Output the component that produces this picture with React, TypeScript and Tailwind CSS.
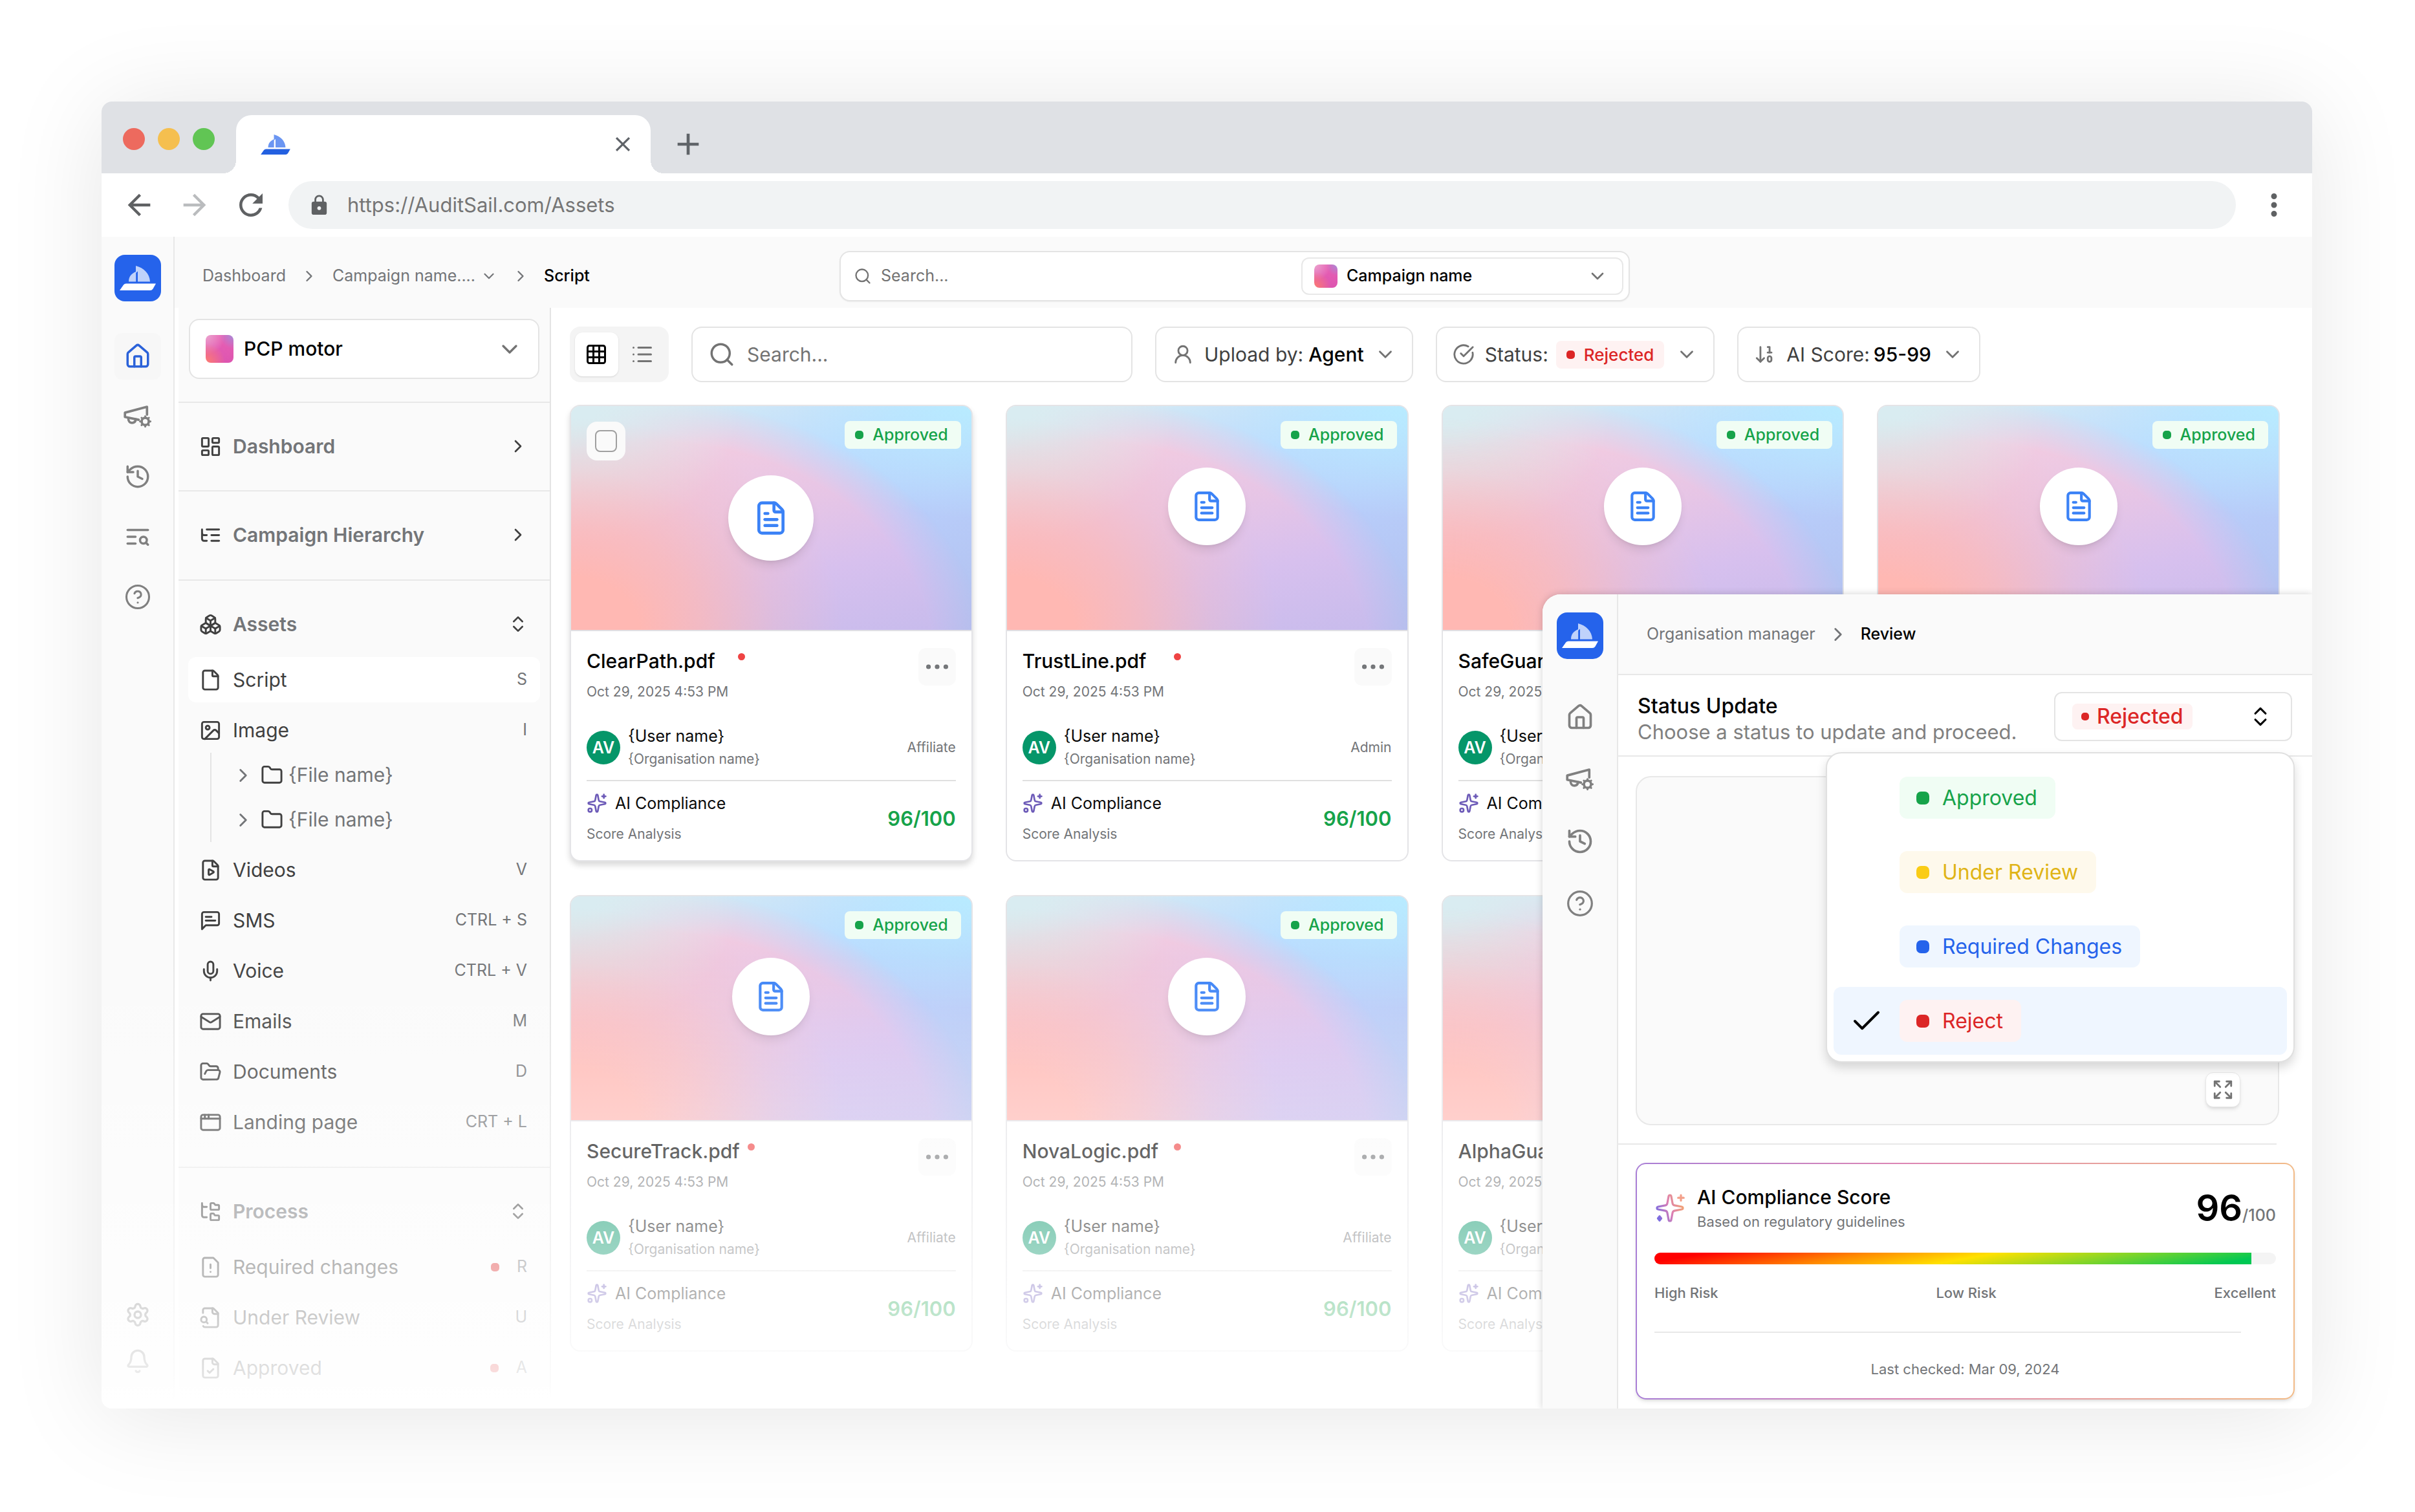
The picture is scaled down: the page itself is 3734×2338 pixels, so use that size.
import React, { useState } from 'react';
import {
  AppWindow,
  ArrowDown10,
  Bell,
  Boxes,
  Check,
  ChevronDown,
  ChevronRight,
  ChevronsUpDown,
  CircleCheckBig,
  CircleQuestionMark,
  Ellipsis,
  Expand,
  File,
  FilePlay,
  FileText,
  Folder,
  FolderOpen,
  FolderTree,
  Grid3x3,
  History,
  House,
  Image,
  LayoutDashboard,
  List,
  Mail,
  Mic,
  Search,
  Settings,
  Sparkles,
  UserRound,
} from 'lucide-react';
import { MdAdd, MdArrowBack, MdArrowForward, MdClose, MdLock, MdMoreVert, MdRefresh } from 'react-icons/md';

type IconProps = { size?: number; className?: string };

/* Icons that the packages do not have in this drawing */

const StrokeIcon = ({ size = 24, className, children }: IconProps & { children: React.ReactNode }) => (
  <svg
    width={size}
    height={size}
    viewBox="0 0 24 24"
    fill="none"
    stroke="currentColor"
    strokeWidth="2"
    strokeLinecap="round"
    strokeLinejoin="round"
    className={className}
    aria-hidden="true"
  >
    {children}
  </svg>
);

const CampaignSettingsIcon = (props: IconProps) => (
  <StrokeIcon {...props}>
    <path d="M19.8 10.5V3.8L1.2 8.8v3.6l11.6 2.4" />
    <path d="M4 13.2c0 2.6 1.2 4.2 3.1 4.2s3-1.2 3.3-3" />
    <circle cx="18.3" cy="16.2" r="3" />
    <path
      strokeWidth="1.6"
      d="M18.3 12.6v-.8M18.3 20.6v-.8M14.7 16.2h-.8M22.7 16.2h-.8M15.8 13.7l-.6-.6M21.4 19.3l-.6-.6M15.8 18.7l-.6.6M21.4 13.1l-.6.6"
    />
  </StrokeIcon>
);

const LogSearchIcon = (props: IconProps) => (
  <StrokeIcon {...props}>
    <path d="M21 6H3" />
    <path d="M10 12H3" />
    <path d="M10 18H3" />
    <circle cx="17" cy="15" r="3" />
    <path d="m21 19-1.9-1.9" />
  </StrokeIcon>
);

const HierarchyIcon = (props: IconProps) => (
  <StrokeIcon {...props}>
    <path d="M21 12h-8" />
    <path d="M21 6H8" />
    <path d="M21 18h-8" />
    <path d="M3 6v4c0 1.1.9 2 2 2h3" />
    <path d="M3 10v6c0 1.1.9 2 2 2h3" />
  </StrokeIcon>
);

const SmsIcon = (props: IconProps) => (
  <StrokeIcon {...props}>
    <path d="M21 15a2 2 0 0 1-2 2H7l-4 4V5a2 2 0 0 1 2-2h14a2 2 0 0 1 2 2z" />
    <path d="M13 8H7" />
    <path d="M17 12H7" />
  </StrokeIcon>
);

const FileAlertIcon = (props: IconProps) => (
  <StrokeIcon {...props}>
    <path d="M15 2H6a2 2 0 0 0-2 2v16a2 2 0 0 0 2 2h12a2 2 0 0 0 2-2V7Z" />
    <path d="M12 9v4" />
    <path d="M12 17h.01" />
  </StrokeIcon>
);

const FileReviewIcon = (props: IconProps) => (
  <StrokeIcon {...props}>
    <path d="M14 2v4a2 2 0 0 0 2 2h4" />
    <path d="M4.268 21a2 2 0 0 0 1.727 1H18a2 2 0 0 0 2-2V7l-5-5H6a2 2 0 0 0-2 2v3" />
    <path d="m9 18-1.5-1.5" />
    <circle cx="5" cy="14" r="3" />
  </StrokeIcon>
);

const FileApprovedIcon = (props: IconProps) => (
  <StrokeIcon {...props}>
    <path d="M15 2H6a2 2 0 0 0-2 2v16a2 2 0 0 0 2 2h12a2 2 0 0 0 2-2V7Z" />
    <path d="M14 2v4a2 2 0 0 0 2 2h4" />
    <path d="m9 15 2 2 4-4" />
  </StrokeIcon>
);

const GradientSparkles = () => (
  <svg width="48" height="48" viewBox="0 0 24 24" fill="none" stroke="url(#sparkle)" strokeWidth="1.6" strokeLinecap="round" strokeLinejoin="round" aria-hidden="true">
    <defs>
      <linearGradient id="sparkle" gradientUnits="userSpaceOnUse" x1="2" y1="16" x2="22" y2="8">
        <stop stopColor="#7c6ce0" />
        <stop offset="0.5" stopColor="#dc7fb4" />
        <stop offset="1" stopColor="#f3a46e" />
      </linearGradient>
    </defs>
    <path d="M11.017 2.814a1 1 0 0 1 1.966 0l1.051 5.558a2 2 0 0 0 1.594 1.594l5.558 1.051a1 1 0 0 1 0 1.966l-5.558 1.051a2 2 0 0 0-1.594 1.594l-1.051 5.558a1 1 0 0 1-1.966 0l-1.051-5.558a2 2 0 0 0-1.594-1.594l-5.558-1.051a1 1 0 0 1 0-1.966l5.558-1.051a2 2 0 0 0 1.594-1.594z" />
    <path d="M20.500 2v4.200" stroke="#f3a08a" />
    <path d="M22.600 4.100h-4.200" stroke="#f3a08a" />
    <path d="m4 18.400 1.300 1.600L4 21.600 2.700 20z" fill="#7c6ce0" />
  </svg>
);

const Boat = ({ className, sail, hull }: { className: string; sail: string; hull: string }) => (
  <svg viewBox="0 0 56 38" className={className} aria-hidden="true">
    <path d="M25 0C37 3 46.500 12 47 24.500H28V8.500L25 11Z" fill={sail} />
    <path d="M25.200 9C18 12 14 17 14 24.500H25.200Z" fill={sail} />
    <path d="M10 27.500H56L51.500 35.500Q50 38 47 38H0L6 29.500Q7.500 27.500 10 27.500Z" fill={hull} />
  </svg>
);

const Logo = () => (
  <a href="#home" aria-label="AuditSail" className="flex size-[72px] items-center justify-center rounded-2xl bg-[#2563eb]">
    <Boat className="h-[38px] w-14" sail="#bfd2fb" hull="#ffffff" />
  </a>
);

const Swatch = ({ className }: { className: string }) => (
  <span
    className={`block shrink-0 rounded-lg bg-[radial-gradient(circle_at_0%_100%,#ff7d6e,transparent_50%),radial-gradient(circle_at_100%_0%,#a58bd8,transparent_35%),radial-gradient(circle_at_0%_0%,#eba6cf,transparent_50%),linear-gradient(#e860b4,#dd55b0)] ${className}`}
  />
);

/* Browser chrome */

const BrowserBar = () => (
  <div>
    <div className="flex h-[111px] items-end bg-[#dfe1e5]">
      <div className="flex h-full w-[208px] items-center gap-5 pt-1 pl-[33px]">
        <span className="size-[34px] rounded-full bg-[#ed6a5e]" />
        <span className="size-[34px] rounded-full bg-[#f5bf4f]" />
        <span className="size-[34px] rounded-full bg-[#61c554]" />
      </div>
      <div className="relative flex h-[90px] w-[641px] items-center justify-between rounded-t-3xl bg-white pr-6 pl-[38px] before:absolute before:-left-5 before:bottom-0 before:size-5 before:bg-[radial-gradient(circle_at_0_0,transparent_20px,#fff_20px)] after:absolute after:-right-5 after:bottom-0 after:size-5 after:bg-[radial-gradient(circle_at_100%_0,transparent_20px,#fff_20px)]">
        <Boat className="h-[31px] w-[46px]" sail="#6b96f2" hull="#2360e0" />
        <button aria-label="Close tab" className="text-[#5f6368]">
          <MdClose size={38} />
        </button>
      </div>
      <button aria-label="New tab" className="ml-[30px] flex h-[90px] items-center text-[#5f6368]">
        <MdAdd size={56} />
      </button>
    </div>
    <div className="flex h-[98px] items-center bg-white pr-8 pl-8">
      <div className="flex w-[257px] items-center gap-[34px] text-[#5f6163]">
        <button aria-label="Back"><MdArrowBack size={52} /></button>
        <button aria-label="Forward" className="text-[#babcbe]"><MdArrowForward size={52} /></button>
        <button aria-label="Reload"><MdRefresh size={54} /></button>
      </div>
      <label className="flex h-[74px] flex-1 items-center gap-[26px] rounded-full bg-[#f1f3f4] pl-[30px]">
        <MdLock size={35} className="text-[#5f6163]" />
        <input
          aria-label="Address"
          defaultValue="https://AuditSail.com/Assets"
          className="flex-1 bg-transparent text-[31px] text-[#757575] outline-none"
        />
      </label>
      <button aria-label="Browser menu" className="ml-8 text-[#5f6163]">
        <MdMoreVert size={54} />
      </button>
    </div>
  </div>
);

/* Left rail and sidebar */

const Rail = () => (
  <nav aria-label="Main" className="flex w-[113px] shrink-0 flex-col items-center border-r-2 border-[#e8e8e8] bg-[#fafafa] pt-7 pb-[53px] text-[#808080]">
    <Logo />
    <div className="mt-[49px] flex flex-col items-center gap-[21px]">
      <a href="#home" aria-label="Home" className="flex size-[72px] items-center justify-center rounded-xl bg-[#f7f7f7] text-[#2b62d9]">
        <House size={42} />
      </a>
      <a href="#campaigns" aria-label="Campaign settings" className="flex size-[72px] items-center justify-center">
        <CampaignSettingsIcon size={44} />
      </a>
      <a href="#history" aria-label="History" className="flex size-[72px] items-center justify-center">
        <History size={42} />
      </a>
      <a href="#logs" aria-label="Logs" className="flex size-[72px] items-center justify-center">
        <LogSearchIcon size={42} />
      </a>
      <a href="#help" aria-label="Help" className="flex size-[72px] items-center justify-center">
        <CircleQuestionMark size={42} strokeWidth={1.75} />
      </a>
    </div>
    <div className="mt-auto flex flex-col gap-8">
      <button aria-label="Settings"><Settings size={40} /></button>
      <button aria-label="Notifications"><Bell size={40} /></button>
    </div>
  </nav>
);

type Item = { label: string; keys: string; icon: React.ElementType; dot?: boolean; files?: string[]; active?: boolean };

const assets: Item[] = [
  { label: 'Script', keys: 'S', icon: File, active: true },
  { label: 'Image', keys: 'I', icon: Image, files: ['{File name}', '{File name}'] },
  { label: 'Videos', keys: 'V', icon: FilePlay },
  { label: 'SMS', keys: 'CTRL + S', icon: SmsIcon },
  { label: 'Voice', keys: 'CTRL + V', icon: Mic },
  { label: 'Emails', keys: 'M', icon: Mail },
  { label: 'Documents', keys: 'D', icon: FolderOpen },
  { label: 'Landing page', keys: 'CRT + L', icon: AppWindow },
];

const process: Item[] = [
  { label: 'Required changes', keys: 'R', icon: FileAlertIcon, dot: true },
  { label: 'Under Review', keys: 'U', icon: FileReviewIcon },
  { label: 'Approved', keys: 'A', icon: FileApprovedIcon, dot: true },
];

const SectionHead = ({ icon: Icon, label, end: End }: { icon: React.ElementType; label: string; end: React.ElementType }) => (
  <button className="flex h-[70px] w-full items-center gap-[17px] pr-[33px] pl-8 text-[#404040]">
    <Icon size={35} />
    <span className="text-[30px] font-semibold text-[#737578]">{label}</span>
    <End size={32} className="ml-auto" />
  </button>
);

const ItemList = ({ items }: { items: Item[] }) => (
  <ul className="mx-[15px] mt-4 flex flex-col gap-2">
    {items.map(({ label, keys, icon: Icon, dot, files, active }) => (
      <li key={label}>
        <a
          href="#assets"
          className={`flex h-[70px] items-center gap-[17px] rounded-xl pr-5 pl-[17px] text-[#404040] ${active ? 'bg-white' : ''}`}
        >
          <Icon size={35} />
          <span className="text-[30px]">{label}</span>
          {dot && <span className="mr-2.5 ml-auto size-[13px] rounded-[5px] bg-[#dc2626]" />}
          <span className={`text-[25px] text-[#737578] ${dot ? '' : 'ml-auto'}`}>{keys}</span>
        </a>
        {files && (
          <ul className="ml-[34px] border-l-2 border-[#e4e4e4]">
            {files.map((file, i) => (
              <li key={i}>
                <button className="flex h-[69px] items-center gap-2 pl-8 text-[30px] text-[#737578]">
                  <ChevronRight size={34} />
                  <Folder size={35} className="ml-0.5 text-[#404040]" />
                  {file}
                </button>
              </li>
            ))}
          </ul>
        )}
      </li>
    ))}
  </ul>
);

const Sidebar = () => (
  <aside className="w-[582px] shrink-0 border-r-2 border-l-6 border-r-[#e4e4e4] border-l-white bg-[#fafafa]">
    <div className="px-4 pt-[17px] pb-[35px]">
      <div className="relative flex items-center">
        <Swatch className="absolute left-[26px] size-[43px]" />
        <select
          aria-label="Workspace"
          className="h-[93px] w-full appearance-none rounded-2xl border-2 border-[#e4e4e4] bg-white pl-[83px] text-[30px] font-medium text-black"
        >
          <option>PCP motor</option>
        </select>
        <ChevronDown size={40} className="pointer-events-none absolute right-[26px] text-[#737373]" />
      </div>
    </div>
    <div className="border-t-2 border-[#e8e8e8] pt-8 pb-[33px]">
      <SectionHead icon={LayoutDashboard} label="Dashboard" end={ChevronRight} />
    </div>
    <div className="border-t-2 border-[#e8e8e8] pt-8 pb-[34px]">
      <SectionHead icon={HierarchyIcon} label="Campaign Hierarchy" end={ChevronRight} />
    </div>
    <div className="border-t-2 border-[#e8e8e8] pt-8 pb-[34px]">
      <SectionHead icon={Boxes} label="Assets" end={ChevronsUpDown} />
      <ItemList items={assets} />
    </div>
    <div className="border-t-2 border-[#e8e8e8] pt-8 pb-7">
      <SectionHead icon={FolderTree} label="Process" end={ChevronsUpDown} />
      <ItemList items={process} />
    </div>
  </aside>
);

/* Top header */

const Header = () => (
  <header className="grid h-[110px] grid-cols-[1fr_1222px_1fr] items-center bg-[#fafafa] pt-3 pr-[27px]">
    <nav aria-label="Breadcrumb" className="flex items-center gap-[22px] pl-[43px] text-[25px] text-[#737578]">
      <a href="#dashboard">Dashboard</a>
      <ChevronRight size={28} />
      <button className="flex items-center gap-2">
        Campaign name....
        <ChevronDown size={26} />
      </button>
      <ChevronRight size={28} />
      <span className="font-medium text-black">Script</span>
    </nav>
    <div className="flex h-[78px] items-center gap-3.5 rounded-2xl border-2 border-[#e4e4e4] bg-white pr-2 pl-5 shadow-xs">
      <Search size={28} className="text-[#737373]" />
      <input type="search" aria-label="Search everything" placeholder="Search..." className="min-w-0 flex-1 text-[25px] outline-none placeholder:text-[#737373]" />
      <div className="relative flex items-center">
        <Swatch className="absolute left-5 size-[36px]" />
        <select
          aria-label="Campaign"
          className="h-[58px] w-[498px] appearance-none rounded-xl border-2 border-[#e8e8e8] bg-white pl-[68px] text-[25px] font-medium text-black"
        >
          <option>Campaign name</option>
        </select>
        <ChevronDown size={32} className="pointer-events-none absolute right-6 text-[#737373]" />
      </div>
    </div>
  </header>
);

/* Filter bar */

const selectText = 'field-sizing-content appearance-none bg-transparent font-medium';

const Filters = () => (
  <div className="flex items-center gap-[35px] text-[30px] text-[#404040]">
    <div className="flex h-[86px] w-[153px] items-center gap-1 rounded-2xl bg-[#f4f4f4] px-2">
      <button aria-label="Grid view" className="flex size-[68px] items-center justify-center rounded-xl bg-white text-black shadow-sm">
        <Grid3x3 size={36} />
      </button>
      <button aria-label="List view" className="flex size-[68px] items-center justify-center text-[#737373]">
        <List size={36} />
      </button>
    </div>
    <label className="flex h-[86px] w-[682px] items-center gap-[18px] rounded-2xl border-2 border-[#e4e4e4] px-6">
      <Search size={42} className="shrink-0 text-[#737373]" />
      <input type="search" aria-label="Search assets" placeholder="Search..." className="min-w-0 flex-1 outline-none placeholder:text-[#737373]" />
    </label>
    <label className="flex h-[86px] items-center rounded-2xl border-2 border-[#e4e4e4] px-6">
      <UserRound size={34} className="mr-4 text-[#737373]" />
      Upload by:
      <select className={`ml-2 text-black ${selectText}`}>
        <option>Agent</option>
      </select>
      <ChevronDown size={34} className="ml-4 text-[#737373]" />
    </label>
    <label className="flex h-[86px] items-center rounded-2xl border-2 border-[#e4e4e4] px-6">
      <CircleCheckBig size={34} className="mr-4 text-[#737373]" />
      Status:
      <span className="ml-3 flex h-[43px] items-center gap-3.5 rounded-lg bg-[#fef2f2] px-4 text-[26px] text-[#dc2626]">
        <span className="size-[13px] rounded-[5px] bg-[#dc2626]" />
        <select className={selectText}>
          <option>Rejected</option>
        </select>
      </span>
      <ChevronDown size={34} className="ml-[18px] text-[#737373]" />
    </label>
    <label className="flex h-[86px] items-center rounded-2xl border-2 border-[#e4e4e4] px-6">
      <ArrowDown10 size={34} className="mr-4 text-[#737373]" />
      AI Score:
      <select className={`ml-1.5 text-black ${selectText}`}>
        <option>95-99</option>
      </select>
      <ChevronDown size={34} className="ml-4 text-[#737373]" />
    </label>
  </div>
);

/* Asset cards */

type Card = { id: number; title?: string; role?: string; active?: boolean };

const cards: Card[] = [
  { id: 1, title: 'ClearPath.pdf', role: 'Affiliate', active: true },
  { id: 2, title: 'TrustLine.pdf', role: 'Admin' },
  { id: 3, title: 'SafeGuard.pdf', role: 'Affiliate' },
  { id: 4 },
  { id: 5, title: 'SecureTrack.pdf', role: 'Affiliate' },
  { id: 6, title: 'NovaLogic.pdf', role: 'Affiliate' },
  { id: 7, title: 'AlphaGuard.pdf', role: 'Affiliate' },
];

const Thumb = ({ title, active }: { title?: string; active?: boolean }) => (
  <div
    className={`relative flex h-[348px] items-center justify-center overflow-hidden rounded-t-[14px] border-b-2 border-[#e0e0e4] bg-[radial-gradient(ellipse_45%_50%_at_100%_0%,#b8ebff,transparent),linear-gradient(160deg,#d9edf2_5%,#bcdcff_38%,#b8cdfa_62%,#b2c0ee)] ${active ? '' : 'pb-9'}`}
  >
    <div className="absolute inset-0 bg-[linear-gradient(165deg,#f3cce0_20%,#e6c5e6_48%,#d7c0ee_70%,#c6bbec)] [mask-image:radial-gradient(ellipse_84%_118%_at_20%_115%,#000_84%,rgba(0,0,0,0.5)_92%,transparent_100%)]" />
    <div className="absolute inset-0 bg-[radial-gradient(ellipse_68%_95%_at_0%_100%,#ffb8b3_25%,rgba(255,184,179,0.7)_48%,rgba(255,184,179,0.25)_75%,rgba(255,184,179,0)),radial-gradient(ellipse_42%_62%_at_0%_0%,#d9ecf1_15%,rgba(217,236,241,0.6)_50%,rgba(217,236,241,0))]" />
    {active && (
      <label className="absolute top-6 left-6 flex size-[60px] items-center justify-center rounded-2xl bg-[#fafafa]">
        <input type="checkbox" aria-label={`Select ${title}`} className="size-[34px] appearance-none rounded-lg border-2 border-[#a0a0a0]" />
      </label>
    )}
    <span className="absolute top-[23px] right-4 flex h-[43px] items-center gap-3.5 rounded-lg bg-[#f0fdf4] pr-5 pl-4 text-[25px] font-medium text-[#16a34a]">
      <span className="size-[13px] rounded-[5px] bg-[#16a34a]" />
      Approved
    </span>
    <span className={`relative flex items-center justify-center rounded-full bg-white text-[#3b82f6] shadow-lg ${active ? 'size-[132px]' : 'size-[120px]'}`}>
      <FileText size={active ? 56 : 50} />
    </span>
  </div>
);

const AssetCard = ({ title, role, active }: Card) => (
  <article className={`rounded-2xl border-2 border-[#e4e4e7] bg-white ${active ? 'shadow-[0_6px_10px_rgba(0,0,0,0.15)]' : ''}`}>
    <Thumb title={title} active={active} />
    {title && (
      <div className="px-6 pt-[26px] pb-[22px] text-[21px] text-[#737578]">
        <div className="flex items-start justify-between">
          <div>
            <div className="flex gap-3 text-[30px] leading-10 font-medium text-black">
              <h3 className="min-w-[222px]">{title}</h3>
              <span className="mt-2 size-[11px] rounded-full bg-[#ef4444]" />
            </div>
            <p className="mt-3.5 leading-7">Oct 29, 2025 4:53 PM</p>
          </div>
          <button aria-label={`More actions for ${title}`} className="flex size-[58px] items-center justify-center rounded-xl bg-[#fafafa]">
            <Ellipsis size={46} strokeWidth={1.75} />
          </button>
        </div>
        <div className="mt-9 flex items-center leading-9">
          <span className="flex size-[52px] items-center justify-center rounded-full bg-[#059669] text-[25px] font-semibold text-white">AV</span>
          <div className="ml-3">
            <p className="text-[25px] text-[#0a0a0a]">{'{User name}'}</p>
            <p>{'{Organisation name}'}</p>
          </div>
          <span className="ml-auto">{role}</span>
        </div>
        <div className="mt-3.5 flex items-center justify-between border-t-2 border-[#e0e0e0] pt-4 leading-9">
          <div>
            <p className="flex items-center gap-3 text-[25px] text-[#0a0a0a]">
              <Sparkles size={32} className="text-[#6d5bb8]" />
              AI Compliance
            </p>
            <p className="mt-3">Score Analysis</p>
          </div>
          <strong className="text-[31px] font-semibold text-[#16a34a]">96/100</strong>
        </div>
      </div>
    )}
  </article>
);

/* Review panel */

const statuses = [
  { label: 'Approved', badge: 'bg-[#f0fdf4] text-[#16a34a]', dot: 'bg-[#16a34a]' },
  { label: 'Under Review', badge: 'bg-[#fef9ec] text-[#e0b416]', dot: 'bg-[#facc15]' },
  { label: 'Required Changes', badge: 'bg-[#eff6ff] text-[#2563eb]', dot: 'bg-[#2563eb]' },
  { label: 'Reject', badge: 'bg-[#fef2f2] text-[#dc2626]', dot: 'bg-[#dc2626]' },
];

const StatusMenu = ({ selected, onSelect }: { selected: string; onSelect: (label: string) => void }) => (
  <ul
    role="listbox"
    aria-label="Status"
    className="absolute top-[119px] right-[27px] z-10 flex w-[725px] flex-col gap-2.5 rounded-3xl border-2 border-[#e0e0e0] bg-white px-2.5 pt-4 pb-2.5 shadow-[0_8px_16px_rgba(0,0,0,0.15)]"
  >
    {statuses.map(({ label, badge, dot }) => (
      <li key={label} role="option" aria-selected={label === selected}>
        <button
          onClick={() => onSelect(label)}
          className={`flex h-[105px] w-full items-center rounded-xl ${label === selected ? 'bg-[#eff6ff]' : ''}`}
        >
          <span className="flex w-[102px] justify-center text-black">{label === selected && <Check size={54} strokeWidth={1.75} />}</span>
          <span className={`flex h-[65px] items-center gap-5 rounded-xl pr-7 pl-[26px] text-[32px] ${badge}`}>
            <span className={`size-5 rounded-[7px] ${dot}`} />
            {label}
          </span>
        </button>
      </li>
    ))}
  </ul>
);

const ScoreCard = () => (
  <section className="mt-7 mr-[27px] mb-3.5 ml-[27px] rounded-2xl bg-[linear-gradient(90deg,#a97fd6,#dc85b4_40%,#f2bb88)] p-0.5 shadow-md">
    <div className="rounded-[14px] bg-white px-[27px] pt-[31px] pb-[29px] text-[22px] leading-8 text-[#737578]">
      <div className="flex items-center">
        <GradientSparkles />
        <div className="ml-[18px]">
          <h2 className="text-[30px] leading-10 font-medium text-black">AI Compliance Score</h2>
          <p className="mt-0.5">Based on regulatory guidelines</p>
        </div>
        <p className="ml-auto text-[25px] font-medium">
          <span className="text-[56px] leading-none font-semibold text-black">96</span>/100
        </p>
      </div>
      <div role="meter" aria-label="Compliance score" aria-valuenow={96} aria-valuemin={0} aria-valuemax={100} className="mt-8 h-[18px] overflow-hidden rounded-full bg-[#f4f4f4]">
        <div className="h-full w-[96%] bg-[linear-gradient(170deg,#ff0000_8%,#ff8a00_33%,#ffe100_52%,#00c853_95%)]" />
      </div>
      <div className="mt-7 flex justify-between font-medium">
        <span>High Risk</span>
        <span>Low Risk</span>
        <span>Excellent</span>
      </div>
      <hr className="mt-11 mr-[54px] border-t-2 border-[#e8e8e8]" />
      <p className="mt-10 text-center">Last checked: Mar 09, 2024</p>
    </div>
  </section>
);

const ReviewPanel = () => {
  const [selected, setSelected] = useState('Reject');
  const [open, setOpen] = useState(true);

  return (
    <section aria-label="Review" className="absolute right-0 bottom-0 z-20 flex w-[1190px] rounded-tl-[28px] bg-white shadow-[0_0_12px_rgba(0,0,0,0.18)]">
      <nav aria-label="Review navigation" className="flex w-[117px] shrink-0 flex-col items-center rounded-tl-[28px] border-r-2 border-[#e8e8e8] bg-[#fafafa] pt-7 text-[#808080]">
        <Logo />
        <div className="mt-[68px] flex flex-col items-center gap-[52px]">
          <a href="#home" aria-label="Home"><House size={44} /></a>
          <a href="#campaigns" aria-label="Campaign settings"><CampaignSettingsIcon size={44} /></a>
          <a href="#history" aria-label="History"><History size={44} /></a>
          <a href="#help" aria-label="Help"><CircleQuestionMark size={44} strokeWidth={1.75} /></a>
        </div>
      </nav>
      <div className="min-w-0 flex-1">
        <nav aria-label="Review breadcrumb" className="flex h-[125px] items-center gap-[18px] border-b-2 border-[#e8e8e8] bg-[#fafafa] pl-11 text-[25px] text-[#737578]">
          <a href="#organisation">Organisation manager</a>
          <ChevronRight size={34} />
          <span className="font-medium text-black">Review</span>
        </nav>
        <div className="relative flex h-[126px] items-center justify-between border-b-2 border-[#e8e8e8] pr-[31px] pl-[30px] text-[32px] leading-10">
          <div className="pt-3">
            <h2 className="font-medium text-black">Status Update</h2>
            <p className="text-[31px] text-[#808080]">Choose a status to update and proceed.</p>
          </div>
          <button
            aria-haspopup="listbox"
            aria-expanded={open}
            onClick={() => setOpen(!open)}
            className="mt-1 flex h-[76px] w-[368px] items-center justify-between rounded-xl border-2 border-[#e4e4e4] pr-7 pl-[26px]"
          >
            <span className="flex h-10 items-center gap-3 rounded-lg bg-[#fef2f2] px-3.5 font-medium text-[#dc2626]">
              <span className="size-3 rounded-[5px] bg-[#dc2626]" />
              Rejected
            </span>
            <ChevronsUpDown size={38} className="text-black" />
          </button>
          {open && <StatusMenu selected={selected} onSelect={setSelected} />}
        </div>
        <div className="mt-[30px] mr-[51px] ml-[27px] flex h-[540px] items-end justify-end rounded-3xl border-2 border-[#e8e8e8] bg-[#fafafa] pr-[58px] pb-[26px]">
          <button aria-label="Expand preview" className="flex size-[54px] items-center justify-center rounded-xl border border-[#e8e8e8] bg-white text-[#737373] shadow-md">
            <Expand size={34} />
          </button>
        </div>
        <hr className="mt-7 mr-[55px] border-t-2 border-[#e8e8e8]" />
        <ScoreCard />
      </div>
    </section>
  );
};

const App = () => (
  <div className="bg-white pt-[157px] pr-[159px] pb-[158px] pl-[157px] font-['Inter',sans-serif]">
    <div className="rounded-2xl shadow-[0_10px_150px_rgba(0,0,0,0.1)]">
      <div className="relative overflow-hidden rounded-2xl bg-white">
        <BrowserBar />
        <div className="relative flex">
          <Rail />
          <div className="flex min-w-0 flex-1 flex-col">
            <Header />
            <div className="flex flex-1">
              <Sidebar />
              <main className="min-w-0 flex-1 pt-[29px] pr-[50px] pl-[29px]">
                <Filters />
                <div className="mt-[35px] grid grid-cols-4 gap-x-[51px] gap-y-[52px]">
                  {cards.map((card) => (
                    <AssetCard key={card.id} {...card} />
                  ))}
                </div>
              </main>
            </div>
          </div>
          {/* fades the lower part of the page out to white */}
          <div className="pointer-events-none absolute inset-x-0 bottom-0 h-[700px] bg-[linear-gradient(to_bottom,transparent,rgba(255,255,255,0.86)_94%,#fff_98%)]" />
        </div>
        <ReviewPanel />
      </div>
    </div>
  </div>
);

export default App;
